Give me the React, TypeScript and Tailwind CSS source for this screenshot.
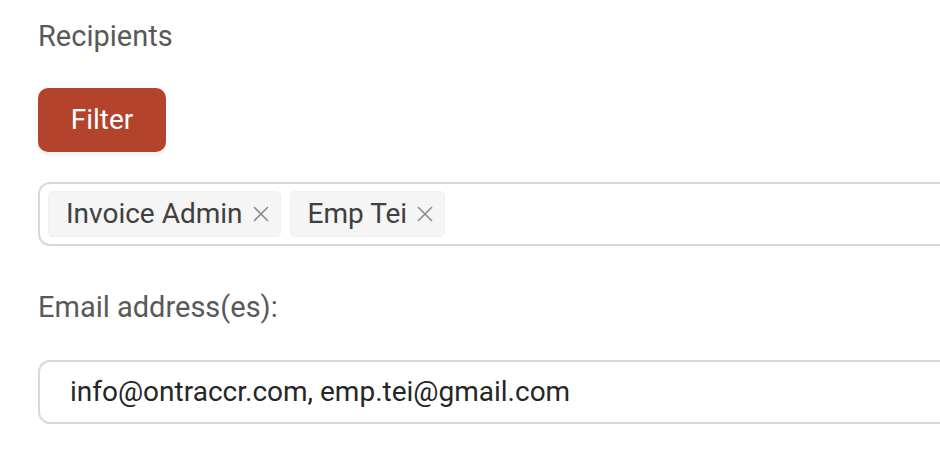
const recipients = ["Invoice Admin", "Emp Tei"];

const Close = () => (
  <svg width="16" height="16" viewBox="0 0 16 16" className="text-[#8c8c8c]">
    <path d="M1 1L15 15M15 1L1 15" stroke="currentColor" strokeWidth="1.6" fill="none" />
  </svg>
);

const App = () => {
  return (
    <div className="w-[940px] h-[464px] overflow-hidden bg-white font-['Roboto',sans-serif] text-[28px]">
      <div className="flex flex-col items-start pl-[38px] pt-[14px]">
        <p className="text-[29px] leading-[44px] text-[#595959]">Recipients</p>

        <button className="mt-[30px] h-[64px] w-[128px] rounded-[10px] bg-[#b3432b] text-white leading-none shadow-[0_4px_0_rgba(0,0,0,0.045)]">
          Filter
        </button>

        <div className="mt-[30px] flex h-[64px] w-[960px] items-center gap-[9px] rounded-[12px] border-2 border-[#d9d9d9] px-[8px]">
          {recipients.map((r) => (
            <span
              key={r}
              className="flex h-[46px] items-center gap-[10px] rounded-[5px] border border-[#f0f0f0] bg-[#f5f5f5] pl-[17px] pr-[11px] leading-[44px] text-[#404040]"
            >
              {r}
              <Close />
            </span>
          ))}
        </div>

        <p className="mt-[39px] text-[29px] leading-[44px] text-[#595959]">Email address(es):</p>

        <div className="mt-[31px] flex h-[64px] w-[960px] items-center rounded-[12px] border-2 border-[#d9d9d9] px-[30px] text-[#262626]">
          info@ontraccr.com, emp.tei@gmail.com
        </div>
      </div>
    </div>
  );
};

export default App;
